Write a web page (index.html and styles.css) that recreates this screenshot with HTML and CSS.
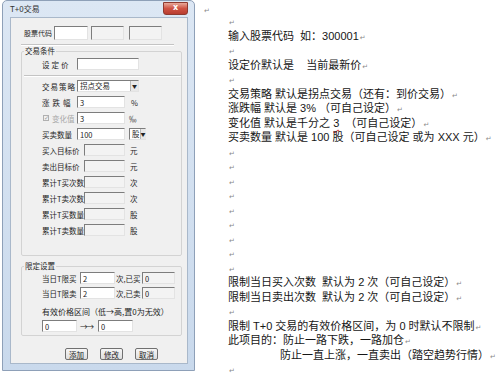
FILE: index.html
```html
<!DOCTYPE html>
<html lang="zh-CN">
<head>
  <meta charset="UTF-8">
  <title>T+0交易</title>
  <link rel="stylesheet" href="styles.css">
</head>
<body>
  <div class="page">

    <!-- T+0 trade dialog -->
    <div class="dialog">
      <div class="titlebar">
        <span class="title">T+0交易</span>
        <span class="close-btn">x</span>
      </div>

      <div class="client">
        <div class="code-row">
          <span class="code-label">股票代码</span>
          <input class="edit code-main" type="text">
          <input class="edit code-sub off" type="text" disabled>
          <input class="edit code-sub off gap" type="text" disabled>
        </div>
        <div class="etched short"></div>

        <fieldset class="group">
          <legend>交易条件</legend>
          <div class="row price-row">
            <span class="lbl spaced2">设定价</span>
            <input class="edit w62" type="text">
          </div>
          <div class="etched"></div>
          <div class="rows">
            <div class="row">
              <span class="lbl spaced1">交易策略</span>
              <div class="combo w62"><span class="combo-text">拐点交易</span><span class="combo-btn">&#9660;</span></div>
            </div>
            <div class="row">
              <span class="lbl spaced3">涨跌幅</span>
              <input class="edit w48" type="text" value="3">
              <span class="unit pct">%</span>
            </div>
            <div class="row">
              <span class="lbl check-lbl"><span class="check">&#10003;</span><span class="grey">变化值</span></span>
              <input class="edit w48" type="text" value="3">
              <span class="unit permil">&#8240;</span>
            </div>
            <div class="row">
              <span class="lbl">买卖数量</span>
              <input class="edit w48" type="text" value="100">
              <div class="combo w17"><span class="combo-text">股</span><span class="combo-btn">&#9660;</span></div>
            </div>
            <div class="row">
              <span class="lbl long">买入目标价</span>
              <input class="edit w41 off" type="text" disabled>
              <span class="unit">元</span>
            </div>
            <div class="row">
              <span class="lbl long">卖出目标价</span>
              <input class="edit w41 off" type="text" disabled>
              <span class="unit">元</span>
            </div>
            <div class="row">
              <span class="lbl long">累计T买次数</span>
              <input class="edit w41 off" type="text" disabled>
              <span class="unit">次</span>
            </div>
            <div class="row">
              <span class="lbl long">累计T卖次数</span>
              <input class="edit w41 off" type="text" disabled>
              <span class="unit">次</span>
            </div>
            <div class="row">
              <span class="lbl long">累计T买数量</span>
              <input class="edit w41 off" type="text" disabled>
              <span class="unit">股</span>
            </div>
            <div class="row">
              <span class="lbl long">累计T卖数量</span>
              <input class="edit w41 off" type="text" disabled>
              <span class="unit">股</span>
            </div>
          </div>
        </fieldset>

        <fieldset class="group limits">
          <legend>限定设置</legend>
          <div class="rows tight">
            <div class="row">
              <span class="lbl limit">当日T限买</span>
              <input class="edit w35" type="text" value="2">
              <span class="done">次,已买</span>
              <input class="edit w33 off" type="text" value="0" disabled>
            </div>
            <div class="row">
              <span class="lbl limit">当日T限卖</span>
              <input class="edit w35" type="text" value="2">
              <span class="done">次,已卖</span>
              <input class="edit w33 off" type="text" value="0" disabled>
            </div>
            <div class="row range-title">有效价格区间（低→高,置0为无效）</div>
            <div class="row">
              <input class="edit w35" type="text" value="0">
              <span class="arrows">→→</span>
              <input class="edit w35" type="text" value="0">
            </div>
          </div>
        </fieldset>

        <div class="buttons">
          <button class="btn">添加</button>
          <button class="btn">修改</button>
          <button class="btn">取消</button>
        </div>
      </div>
    </div>

    <div class="anchor"><span class="pm">&#8629;</span></div>

    <!-- notes, copied from the word document -->
    <div class="doc">
      <p><span class="pm">&#8629;</span></p>
      <p>输入股票代码  如：300001<span class="pm">&#8629;</span></p>
      <p><span class="pm">&#8629;</span></p>
      <p>设定价默认是    当前最新价<span class="pm">&#8629;</span></p>
      <p><span class="pm">&#8629;</span></p>
      <p>交易策略 默认是拐点交易（还有：到价交易）<span class="pm">&#8629;</span></p>
      <p>涨跌幅 默认是 3% （可自己设定）<span class="pm">&#8629;</span></p>
      <p>变化值 默认是千分之 <span class="spell">3</span>  （可自己设定）<span class="pm">&#8629;</span></p>
      <p>买卖数量 默认是 100 股（可自己设定 或为 XXX 元）<span class="pm">&#8629;</span></p>
      <p><span class="pm">&#8629;</span></p>
      <p><span class="pm">&#8629;</span></p>
      <p><span class="pm">&#8629;</span></p>
      <p><span class="pm">&#8629;</span></p>
      <p><span class="pm">&#8629;</span></p>
      <p><span class="pm">&#8629;</span></p>
      <p><span class="pm">&#8629;</span></p>
      <p><span class="pm">&#8629;</span></p>
      <p><span class="pm">&#8629;</span></p>
      <p>限制当日买入次数  默认为 2 次（可自己设定）<span class="pm">&#8629;</span></p>
      <p>限制当日卖出次数  默认为 2 次（可自己设定）<span class="pm">&#8629;</span></p>
      <p><span class="pm">&#8629;</span></p>
      <p>限制 T+0 交易的有效价格区间，为 0 时默认不限制<span class="pm">&#8629;</span></p>
      <p>此项目的：防止一路下跌，一路加仓<span class="pm">&#8629;</span></p>
      <p class="indent">防止一直上涨，一直卖出（踏空趋势行情）<span class="pm">&#8629;</span></p>
      <p><span class="pm">&#8629;</span></p>
    </div>
  </div>
</body>
</html>
```

FILE: styles.css
```css
* {
  box-sizing: border-box;
}

body {
  margin: 0;
  background-color: #fff;
  color: #222;
  font-family: "Liberation Sans", "Noto Sans CJK SC", sans-serif;
}

.page {
  display: flex;
  align-items: flex-start;
  width: 499px;
  height: 374px;
  overflow: hidden;
}

/* Dialog window */
.dialog {
  flex: none;
  display: flex;
  flex-direction: column;
  width: 193px;
  height: 371px;
  margin-left: 2px;
  padding: 0 6px 6px 7px;
  background: linear-gradient(#dce7f4, #c9d9ec);
  border: 1px solid #8ea0b8;
  border-radius: 5px 5px 0 0;
  font-family: "Noto Sans CJK SC", sans-serif;
  font-size: 7.5px;
  color: #1e1e1e;
}

.titlebar {
  display: flex;
  justify-content: space-between;
  height: 16px;
}

.title {
  font-size: 8px;
  line-height: 16px;
  color: #333;
}

.close-btn {
  width: 25px;
  height: 13px;
  margin-top: 1px;
  background: linear-gradient(#e8a99a, #cf5344 50%, #b83d30);
  border: 1px solid #8e3a30;
  border-radius: 0 0 3px 3px;
  color: #fff;
  font-family: "DejaVu Sans", sans-serif;
  font-size: 8px;
  font-weight: bold;
  line-height: 10px;
  text-align: center;
}

.client {
  flex: 1;
  display: flex;
  flex-direction: column;
  padding: 8px 4px 0 10px;
  background-color: #f0f0f0;
  border: 1px solid #a9b8ca;
}

/* Edit boxes */
.edit {
  height: 12px;
  padding: 0 2px;
  margin: 0;
  font: inherit;
  color: #222;
  background-color: #fff;
  border: 1px solid;
  border-color: #7d7d7d #e3e3e3 #e3e3e3 #7d7d7d;
  outline: none;
}

.edit.off {
  background-color: #f3f3f3;
}

.w62 { width: 62px; }
.w48 { width: 48px; }
.w41 { width: 41px; }
.w35 { width: 35px; }
.w33 { width: 33px; }
.w17 { width: 17px; }

.code-row {
  display: flex;
  align-items: center;
  margin-left: 3px;
}

.code-row .edit {
  height: 14px;
}

.code-label {
  width: 30px;
  font-size: 7px;
  white-space: nowrap;
}

.code-main {
  width: 34px;
}

.code-sub {
  width: 33px;
  margin-left: 3px !important;
}

.code-sub.gap {
  margin-left: 5px !important;
}

.etched {
  height: 2px;
  border-top: 1px solid #c4c4c4;
  border-bottom: 1px solid #fff;
}

.etched.short {
  width: 153px;
  margin-top: 4px;
}

/* Group boxes */
.group {
  width: 161px;
  margin: 0;
  padding: 0 0 19px 2px;
  border: 1px solid #d3d3d3;
  border-radius: 2px;
}

.group legend {
  padding: 0 1px;
  line-height: 10px;
}

.group.limits {
  margin-top: 5px;
  padding-bottom: 3px;
}

.price-row {
  margin: 2px 0 5px 18px;
}

.rows {
  display: flex;
  flex-direction: column;
  gap: 4px;
  margin: 3px 0 0 18px;
}

.rows.tight {
  gap: 3px;
  margin-top: 1px;
}

.row {
  display: flex;
  align-items: center;
  height: 12px;
}

.lbl {
  width: 35px;
  white-space: nowrap;
}

.lbl.long {
  width: 42px;
}

.lbl.limit {
  width: 38px;
}

.spaced1 {
  letter-spacing: 1px;
}

.spaced2 {
  letter-spacing: 2px;
}

.spaced3 {
  letter-spacing: 3px;
}

.check-lbl {
  display: flex;
  align-items: center;
}

.check {
  width: 6px;
  height: 6px;
  margin: 0 3px 0 1px;
  border: 1px solid #b0b0b0;
  color: #9a9a9a;
  font-family: "DejaVu Sans", sans-serif;
  font-size: 6px;
  line-height: 4px;
  text-align: center;
}

.grey {
  color: #a8a8a8;
}

.unit {
  margin-left: 5px;
}

.unit.pct {
  margin-left: 6px;
}

.unit.permil {
  margin-left: 4px;
}

/* Drop-down boxes */
.combo {
  display: flex;
  height: 12px;
  background-color: #fff;
  border: 1px solid;
  border-color: #7d7d7d #e3e3e3 #e3e3e3 #7d7d7d;
}

.combo.w17 {
  margin-left: 4px;
}

.combo-text {
  flex: 1;
  padding-left: 2px;
  line-height: 10px;
}

.combo-btn {
  width: 8px;
  background-color: #e8e8e8;
  border-left: 1px solid #b8b8b8;
  font-size: 5px;
  line-height: 10px;
  text-align: center;
  color: #222;
}

.done {
  width: 26px;
  margin-left: 1px;
  white-space: nowrap;
}

.range-title {
  margin-top: 3px;
  font-size: 8px;
  white-space: nowrap;
}

.arrows {
  width: 18px;
  margin-left: 3px;
  letter-spacing: -1px;
}

/* Buttons */
.buttons {
  display: flex;
  gap: 12px;
  margin: 12px 0 0 44px;
}

.btn {
  width: 23px;
  height: 12px;
  padding: 0;
  font: inherit;
  color: #222;
  background: linear-gradient(#f6f6f6, #dedede);
  border: 1px solid #707070;
  border-radius: 2px;
}

/* Word document text */
.anchor {
  flex: none;
  width: 33px;
  padding: 3px 0 0 8px;
  line-height: 10px;
}

.doc {
  padding-top: 14px;
  font-size: 11px;
  color: #161616;
}

.doc p {
  margin: 0;
  height: 14.5px;
  line-height: 14.5px;
  white-space: pre;
}

.doc p.indent {
  padding-left: 52px;
}

.pm {
  margin-left: 1px;
  font-family: "DejaVu Sans", sans-serif;
  font-size: 7px;
  color: #8a8a8a;
}

.spell {
  text-decoration: underline wavy #d44;
  text-underline-offset: 2px;
}
```
